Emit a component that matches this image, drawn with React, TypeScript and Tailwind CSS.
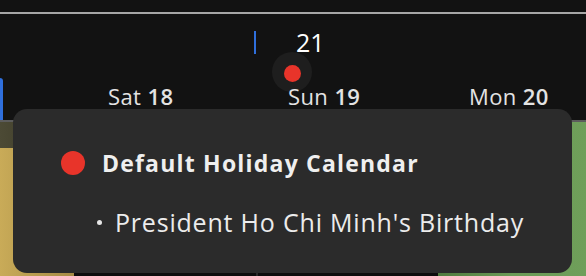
import React from "react";

export default function App() {
  return (
    <div className="relative h-[276px] w-[586px] overflow-hidden bg-[#121212] font-['Open_Sans',sans-serif] text-[#ececec]">
      {/* header */}
      <div className="relative h-[120px]">
        <div className="h-[12px]" />
        <div className="h-[2px] bg-[#a6a6a6]" />
        <div className="mt-[17px] flex h-[23px] items-center">
          <div className="ml-[254px] h-[23px] w-[2px] bg-[#2f6fdc]" />
          <div className="ml-[40px] text-[25px] leading-[23px] text-white">21</div>
        </div>
        {/* marker */}
        <div className="absolute left-[272px] top-[52px] flex h-[40px] w-[40px] items-center justify-center rounded-full bg-[#1e1e1e]">
          <div className="mt-[3px] h-[17px] w-[17px] rounded-full bg-[#e8342a]" />
        </div>
        <div className="relative mt-[30px] flex h-[24px] items-center text-[22px] leading-[24px] tracking-[0.4px] text-[#e3e3e3]">
          <div className="w-[180px] pl-[108px]">
            Sat <span className="font-semibold">18</span>
          </div>
          <div className="w-[181px] pl-[108px]">
            Sun <span className="font-semibold">19</span>
          </div>
          <div className="pl-[108px]">
            Mon <span className="font-semibold">20</span>
          </div>
        </div>
        <div className="absolute left-0 top-[78px] h-[42px] w-[3px] rounded-tr-[4px] bg-[#2f6fdc]" />
      </div>
      <div className="h-[2px] bg-[#5c5c5c]" />
      {/* body */}
      <div className="flex h-[154px]">
        <div className="flex w-[74px] flex-col">
          <div className="h-[26px] bg-gradient-to-r from-[#4c4a35] to-[#34321f]" />
          <div className="flex-1 bg-gradient-to-r from-[#c9ab58] to-[#a58b45]" />
        </div>
        <div className="w-[182px] bg-[#0d0d0d]" />
        <div className="w-[2px] bg-[#2a2a2a]" />
        <div className="w-[180px] bg-[#0d0d0d]" />
        <div className="flex-1 bg-gradient-to-r from-[#4f7a3e] via-[#6a9a56] to-[#6f9f5a]" />
      </div>

      {/* popup */}
      <div className="absolute left-[13px] top-[109px] h-[164px] w-[559px] rounded-[14px] bg-[#2b2b2b]">
        <div className="ml-[48px] mt-[42px] flex h-[24px] items-center">
          <div className="h-[24px] w-[24px] rounded-full bg-[#e8342a]" />
          <div className="ml-[17px] text-[23px] font-bold leading-[24px] tracking-[1.2px] text-[#efefef]">
            Default Holiday Calendar
          </div>
        </div>
        <div className="ml-[84px] mt-[34px] flex h-[26px] items-center">
          <div className="h-[5px] w-[5px] rounded-full bg-[#e6e6e6]" />
          <div className="ml-[13px] text-[25px] leading-[26px] tracking-[0.8px] text-[#ececec]">
            President Ho Chi Minh's Birthday
          </div>
        </div>
      </div>
    </div>
  );
}
